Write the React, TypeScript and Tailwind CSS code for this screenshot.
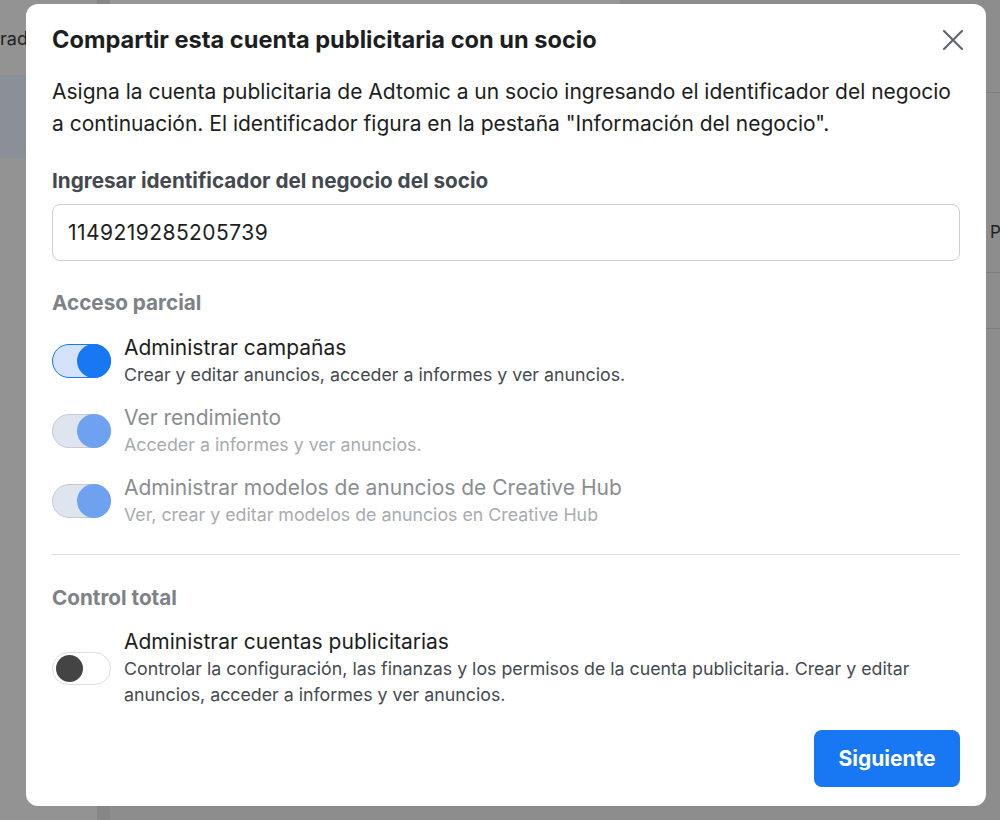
import React from "react";

function Toggle({ state }: { state: "on" | "disabled" | "off" }) {
  if (state === "on") {
    return (
      <div className="relative w-[59px] h-[34px] shrink-0 rounded-full border border-[#1877f2] bg-[#d4e3fb]">
        <div className="absolute right-[-1px] top-[-1px] w-[34px] h-[34px] rounded-full bg-[#1877f2]" />
      </div>
    );
  }
  if (state === "disabled") {
    return (
      <div className="relative w-[59px] h-[34px] shrink-0 rounded-full border border-[#c4cad3] bg-[#dfe5ee]">
        <div className="absolute right-[-1px] top-[-1px] w-[34px] h-[34px] rounded-full bg-[#6ea2f0]" />
      </div>
    );
  }
  return (
    <div className="relative w-[59px] h-[33px] shrink-0 rounded-full border border-[#dadde1] bg-white">
      <div className="absolute left-[3px] top-[2px] w-[27px] h-[27px] rounded-full bg-[#444444]" />
    </div>
  );
}

function Row({
  state,
  title,
  desc,
  disabled,
}: {
  state: "on" | "disabled" | "off";
  title: string;
  desc: string;
  disabled?: boolean;
}) {
  return (
    <div className="flex items-center gap-[13px]">
      <Toggle state={state} />
      <div className="flex flex-col">
        <div
          className={`text-[21px] leading-[28px] ${disabled ? "text-[#8a8d91]" : "text-[#1c1e21]"}`}
        >
          {title}
        </div>
        <div
          className={`text-[17.8px] leading-[26px] ${disabled ? "text-[#a8abaf]" : "text-[#444950]"}`}
        >
          {desc}
        </div>
      </div>
    </div>
  );
}

export default function App() {
  return (
    <div
      className="relative w-[1000px] h-[820px] overflow-hidden bg-[#8e8e8e]"
      style={{ fontFamily: "Inter, Roboto, 'Liberation Sans', sans-serif" }}
    >
      {/* background page (dimmed) */}
      <div className="absolute inset-0 flex">
        <div className="w-[97px] h-full bg-[#939393] flex flex-col">
          <div className="h-[75px] flex items-end pb-[27px]">
            <span className="text-[18px] text-[#222] leading-none">rad</span>
          </div>
          <div className="h-[83px] bg-[#8b8f98]" />
        </div>
        <div className="w-[13px] h-full bg-[#868686]" />
        <div className="flex-1 h-full bg-[#8d8d8d] flex flex-col">
          <div className="h-[6px] flex">
            <div className="w-[510px] h-[6px] bg-[#979797]" />
          </div>
          <div className="flex-1 flex justify-end">
            <div className="w-[10px] flex flex-col">
              <div className="h-[86px]" />
              <div className="h-px bg-[#7e7e7e] ml-[-4px]" />
              <div className="h-[125px]" />
              <div className="h-[28px] text-[17px] text-[#222] leading-[28px]">P</div>
              <div className="h-[26px]" />
              <div className="h-px bg-[#7e7e7e] ml-[-4px]" />
              <div className="h-[55px]" />
              <div className="h-px bg-[#7e7e7e] ml-[-4px]" />
            </div>
          </div>
        </div>
      </div>

      {/* modal */}
      <div className="absolute left-[26px] top-[4px] w-[960px] h-[802px] rounded-[12px] bg-white px-[26px] pt-[18px] flex flex-col">
        <div className="flex items-center justify-between h-[36px]">
          <h1 className="text-[23.6px] leading-[36px] font-bold text-[#1c1e21]">
            Compartir esta cuenta publicitaria con un socio
          </h1>
          <svg
            width="22"
            height="22"
            viewBox="0 0 22 22"
            className="mr-[-4px]"
            fill="none"
            stroke="#606770"
            strokeWidth="2.2"
            strokeLinecap="round"
          >
            <path d="M2 2 L20 20 M20 2 L2 20" />
          </svg>
        </div>

        <p className="mt-[18px] text-[21px] leading-[32px] text-[#1c1e21]">
          Asigna la cuenta publicitaria de Adtomic a un socio ingresando el identificador del negocio
          a continuación. El identificador figura en la pestaña "Información del negocio".
        </p>

        <div className="mt-[27px] text-[20.7px] leading-[28px] font-bold text-[#444950]">
          Ingresar identificador del negocio del socio
        </div>
        <div className="mt-[9px] h-[57px] w-full rounded-[8px] border border-[#ccd0d5] flex items-center px-[15px] text-[21px] tracking-[0.45px] text-[#1c1e21]">
          1149219285205739
        </div>

        <div className="mt-[28px] text-[20.7px] leading-[28px] font-bold text-[#7d8288]">
          Acceso parcial
        </div>

        <div className="mt-[17px] flex flex-col gap-[16px]">
          <Row
            state="on"
            title="Administrar campañas"
            desc="Crear y editar anuncios, acceder a informes y ver anuncios."
          />
          <Row
            state="disabled"
            disabled
            title="Ver rendimiento"
            desc="Acceder a informes y ver anuncios."
          />
          <Row
            state="disabled"
            disabled
            title="Administrar modelos de anuncios de Creative Hub"
            desc="Ver, crear y editar modelos de anuncios en Creative Hub"
          />
        </div>

        <div className="mt-[26px] h-px w-full bg-[#dadde1]" />

        <div className="mt-[29px] text-[20.7px] leading-[28px] font-bold text-[#7d8288]">
          Control total
        </div>

        <div className="mt-[16px]">
          <Row
            state="off"
            title="Administrar cuentas publicitarias"
            desc="Controlar la configuración, las finanzas y los permisos de la cuenta publicitaria. Crear y editar anuncios, acceder a informes y ver anuncios."
          />
        </div>

        <div className="mt-auto mb-[19px] flex justify-end">
          <button className="w-[146px] h-[57px] rounded-[8px] bg-[#1877f2] text-white text-[21px] font-bold">
            Siguiente
          </button>
        </div>
      </div>
    </div>
  );
}
